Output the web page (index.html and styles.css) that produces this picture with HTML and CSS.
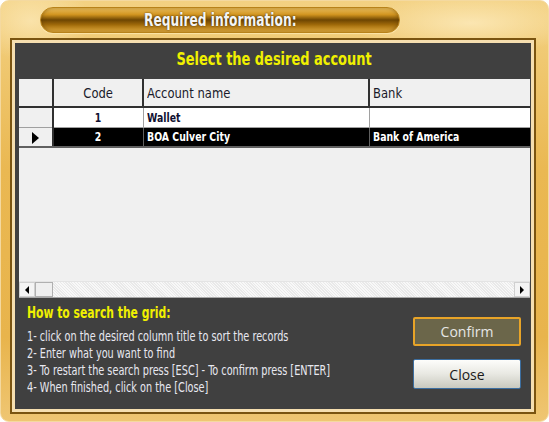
FILE: index.html
```html
<!DOCTYPE html>
<html lang="en">

<head>
    <meta charset="UTF-8">
    <title>Required information</title>
    <link rel="stylesheet" href="styles.css">
</head>

<body>
    <div class="frame">
        <div class="title-row">
            <div class="title-pill"><span class="nar">Required information:</span></div>
        </div>

        <div class="panel">
            <h2 class="panel-title"><span class="nar">Select the desired account</span></h2>

            <div class="grid">
                <table class="grid-table">
                    <thead>
                        <tr>
                            <th class="sel"></th>
                            <th class="code"><span class="nar">Code</span></th>
                            <th><span class="nar">Account name</span></th>
                            <th><span class="nar">Bank</span></th>
                        </tr>
                    </thead>
                    <tbody>
                        <tr>
                            <td class="sel"></td>
                            <td class="code"><span class="nar">1</span></td>
                            <td><span class="nar">Wallet</span></td>
                            <td></td>
                        </tr>
                        <tr class="current">
                            <td class="sel"><span class="arrow"></span></td>
                            <td class="code"><span class="nar">2</span></td>
                            <td><span class="nar">BOA Culver City</span></td>
                            <td><span class="nar">Bank of America</span></td>
                        </tr>
                    </tbody>
                </table>
                <div class="grid-fill"></div>
                <div class="hscroll">
                    <div class="sb-btn"><span class="tri-left"></span></div>
                    <div class="sb-thumb"></div>
                    <div class="sb-track"></div>
                    <div class="sb-btn"><span class="tri-right"></span></div>
                </div>
            </div>

            <div class="help">
                <div class="help-text">
                    <h3><span class="nar">How to search the grid:</span></h3>
                    <ul>
                        <li><span class="nar">1- click on the desired column title to sort the records</span></li>
                        <li><span class="nar">2- Enter what you want to find</span></li>
                        <li><span class="nar">3- To restart the search press [ESC] - To confirm press [ENTER]</span></li>
                        <li><span class="nar">4- When finished, click on the [Close]</span></li>
                    </ul>
                </div>
                <div class="actions">
                    <button class="btn btn-confirm">Confirm</button>
                    <button class="btn btn-close">Close</button>
                </div>
            </div>
        </div>
    </div>
</body>

</html>
```

FILE: styles.css
```css
* {
    margin: 0;
    padding: 0;
    box-sizing: border-box;
}

body {
    background: #ffffff;
    font-family: "DejaVu Sans Condensed", "Liberation Sans", sans-serif;
}

/* narrow look of the original font */
.nar {
    display: inline-block;
    white-space: nowrap;
    transform: scaleX(0.8);
    transform-origin: left center;
}

/* Gold window frame */
.frame {
    width: 549px;
    height: 422px;
    padding: 6px 12px 7px 9px;
    border-radius: 9px;
    border: 1px solid #f4d9a0;
    background:
        radial-gradient(ellipse 120px 30px at 470px 22px, rgba(255, 240, 200, 0.7), transparent),
        radial-gradient(ellipse 60px 40px at 30px 20px, rgba(255, 240, 200, 0.6), transparent),
        linear-gradient(to bottom, #f3d182 0%, #eab852 40%, #e8b44c 80%, #efc673 100%);
    display: flex;
    flex-direction: column;
}

.title-row {
    height: 26px;
    padding-left: 30px;
    margin-bottom: 5px;
}

.title-pill {
    width: 360px;
    height: 26px;
    border-radius: 13px;
    border: 1px solid #b8821a;
    background: linear-gradient(to bottom, #f3c560 0%, #d0931e 28%, #6e4602 50%, #a06a0a 70%, #e8b040 100%);
    box-shadow: inset 0 0 4px rgba(80, 50, 0, 0.5), 0 1px 1px rgba(255, 235, 180, 0.8);
    color: #f4f4f4;
    font-size: 17px;
    font-weight: bold;
    text-align: center;
    line-height: 24px;
    text-shadow: 0 0 2px #4a3000;
}

.title-pill .nar,
.panel-title .nar,
.code .nar {
    transform-origin: center center;
}

/* Dark content panel */
.panel {
    flex: 1;
    border: 2px solid #7a5410;
    box-shadow: inset 0 0 0 3px #f6dfb0;
    background: #404040;
    padding: 3px 4px 3px 7px;
    display: flex;
    flex-direction: column;
}

.panel-title {
    height: 36px;
    color: #f0f000;
    font-size: 18px;
    font-weight: bold;
    text-align: center;
    line-height: 32px;
}

/* Data grid */
.grid {
    width: 511px;
    height: 219px;
    background: #f0f0f0;
    display: flex;
    flex-direction: column;
}

.grid-table {
    border-collapse: collapse;
    table-layout: fixed;
    width: 511px;
    font-size: 13px;
    font-weight: bold;
}

.grid-table th,
.grid-table td {
    text-align: left;
    padding: 0 3px;
    white-space: nowrap;
    overflow: hidden;
}

.grid-table th {
    height: 28px;
    background: #f0f0f0;
    color: #1a1a2a;
    font-size: 14px;
    font-weight: normal;
    border-right: 2px solid #303030;
    border-bottom: 2px solid #303030;
}

.grid-table th .nar {
    transform: scaleX(0.92);
}

.grid-table th:nth-child(1) {
    width: 34px;
}

.grid-table th:nth-child(2) {
    width: 90px;
}

.grid-table th:nth-child(3) {
    width: 226px;
}

.grid-table th:last-child {
    border-right: none;
}

.grid-table td {
    height: 20px;
    background: #ffffff;
    color: #101030;
    border-right: 1px solid #a0a0a0;
    border-bottom: 1px solid #a0a0a0;
}

.grid-table td:last-child {
    border-right: none;
}

.grid-table .code {
    text-align: center;
}

.grid-table td.sel {
    background: #f0f0f0;
    border-right: 2px solid #303030;
}

.grid-table tr.current td {
    background: #000000;
    color: #ffffff;
    border-right-color: #606060;
    border-bottom: 2px solid #606060;
}

.grid-table tr.current td.sel {
    background: #f0f0f0;
    border-right: 2px solid #303030;
    text-align: center;
}

.arrow {
    display: inline-block;
    width: 0;
    height: 0;
    border-top: 6px solid transparent;
    border-bottom: 6px solid transparent;
    border-left: 7px solid #000000;
    vertical-align: middle;
}

.grid-fill {
    flex: 1;
}

/* Horizontal scrollbar */
.hscroll {
    height: 17px;
    display: flex;
    border-top: 1px solid #e4e4e4;
    border-bottom: 1px solid #a8a8a8;
}

.sb-btn {
    width: 16px;
    background: #f4f4f4;
    border: 1px solid #d0d0d0;
    display: flex;
    align-items: center;
    justify-content: center;
}

.sb-thumb {
    width: 18px;
    background: #efefef;
    border: 1px solid #b0b0b0;
}

.sb-track {
    flex: 1;
    background: repeating-linear-gradient(45deg, #f8f8f8 0 1px, #e9e9e9 1px 2px);
}

.tri-left,
.tri-right {
    width: 0;
    height: 0;
    border-top: 4px solid transparent;
    border-bottom: 4px solid transparent;
}

.tri-left {
    border-right: 4px solid #000000;
}

.tri-right {
    border-left: 4px solid #000000;
}

/* Help section */
.help {
    flex: 1;
    display: flex;
    gap: 10px;
    padding: 5px 9px 0 8px;
}

.help-text {
    flex: 1;
    min-width: 0;
}

.help h3 {
    color: #f0f000;
    font-size: 16px;
    font-weight: bold;
    margin-bottom: 6px;
}

.help h3 .nar {
    transform: scaleX(0.75);
}

.help ul {
    list-style: none;
    color: #e8e8f0;
    font-size: 13.5px;
    line-height: 17px;
}

.actions {
    flex: none;
    display: flex;
    flex-direction: column;
    gap: 13px;
    padding-top: 14px;
}

.btn {
    width: 108px;
    height: 30px;
    font-family: "Open Sans", "DejaVu Sans", sans-serif;
    font-size: 14px;
    border-radius: 2px;
    cursor: pointer;
}

.btn-confirm {
    height: 29px;
    background: #6b664a;
    color: #e6e6e6;
    border: 2px solid #e8a428;
}

.btn-close {
    background: linear-gradient(to bottom, #fdfdfb 0%, #e8e8e2 50%, #c9c9bf 100%);
    color: #1a1a1a;
    border: 1px solid #3c6ea0;
}
```
